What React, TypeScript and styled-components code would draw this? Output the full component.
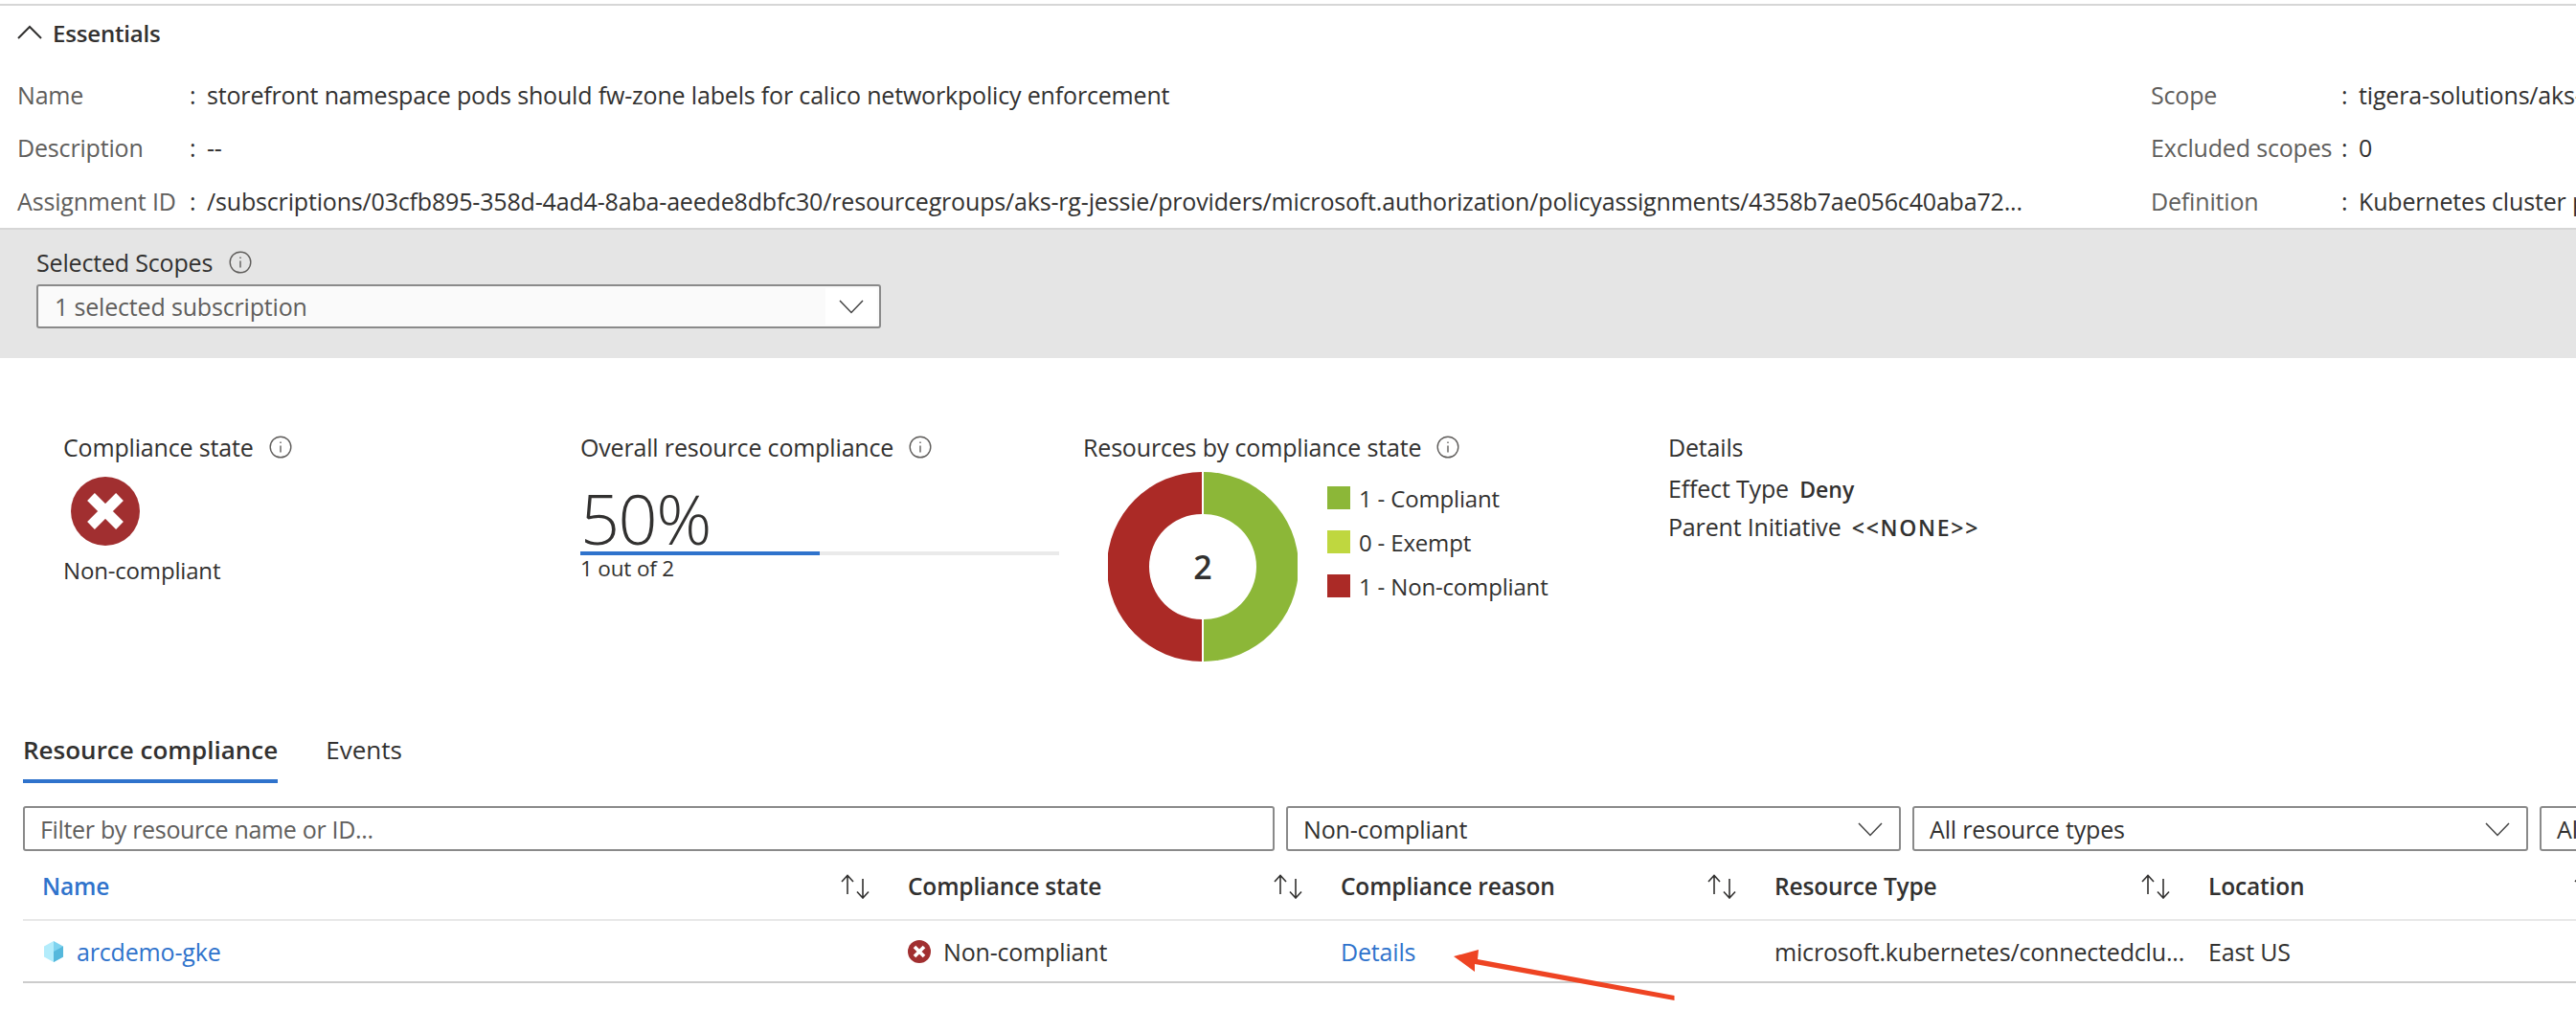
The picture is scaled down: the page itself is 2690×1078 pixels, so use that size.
import * as React from 'react';
import styled, { createGlobalStyle } from 'styled-components';

const GlobalStyle = createGlobalStyle`
  html, body {
    margin: 0;
    padding: 0;
    background: #ffffff;
    overflow: hidden;
  }
  * {
    box-sizing: border-box;
  }
`;

const TEXT = '#323130';
const MUTED = '#605e5c';
const LINK = '#2f73cc';
const RED = '#a12f30';

interface IInfoRow {
  label: string;
  value: string;
}

const leftRows: IInfoRow[] = [
  { label: 'Name', value: 'storefront namespace pods should fw-zone labels for calico networkpolicy enforcement' },
  { label: 'Description', value: '--' },
  {
    label: 'Assignment ID',
    value:
      '/subscriptions/03cfb895-358d-4ad4-8aba-aeede8dbfc30/resourcegroups/aks-rg-jessie/providers/microsoft.authorization/policyassignments/4358b7ae056c40aba72...',
  },
];

const rightRows: IInfoRow[] = [
  { label: 'Scope', value: 'tigera-solutions/aks-rg-jessie' },
  { label: 'Excluded scopes', value: '0' },
  { label: 'Definition', value: 'Kubernetes cluster pods should use labels' },
];

const legend = [
  { color: '#8cb738', label: '1 - Compliant' },
  { color: '#bfd73f', label: '0 - Exempt' },
  { color: '#ab2a26', label: '1 - Non-compliant' },
];

const Chevron = ({ up }: { up?: boolean }) => (
  <svg width="26" height="16" viewBox="0 0 26 16" fill="none" stroke={up ? '#323130' : '#444444'} strokeWidth={up ? 2 : 1.5}>
    <path d={up ? 'M1 14 L13 2 L25 14' : 'M1 2 L13 14.5 L25 2'} />
  </svg>
);

const InfoIcon = () => (
  <svg width="24" height="24" viewBox="0 0 24 24" fill="none" stroke="#605e5c" strokeWidth="1.4">
    <circle cx="12" cy="12" r="10.8" />
    <path d="M12 10.5 V17.5" />
    <path d="M12 6.5 V8" />
  </svg>
);

const SortIcon = () => (
  <svg width="34" height="26" viewBox="0 0 34 26" fill="none" stroke="#323130" strokeWidth="1.6">
    <path d="M9 1.5 V21 M3 8 L9 1.5 L15 8" />
    <path d="M25 5 V25 M19 18.5 L25 25 L31 18.5" />
  </svg>
);

const ErrorIcon = ({ size }: { size: number }) => (
  <svg width={size} height={size} viewBox="0 0 72 72">
    <circle cx="36" cy="36" r="36" fill={RED} />
    <path d="M21 21 L51 51 M51 21 L21 51" stroke="#ffffff" strokeWidth="11" />
  </svg>
);

const CubeIcon = () => (
  <svg width="22" height="24" viewBox="0 0 22 24">
    <path d="M11 1 L21 6.5 V17.5 L11 23 Z" fill="#7fd3ef" />
    <path d="M11 1 L1 6.5 V17.5 L11 23 Z" fill="#b3ecfb" />
    <path d="M11 12 L21 6.5 V17.5 L11 23 Z" fill="#55b8dc" />
  </svg>
);

const Donut = () => (
  <svg width="198" height="198" viewBox="0 0 198 198">
    <path d="M100 0 A99 99 0 0 1 100 198 V154 A55 55 0 0 0 100 44 Z" fill="#8cb738" />
    <path d="M98 0 A99 99 0 0 0 98 198 V154 A55 55 0 0 1 98 44 Z" fill="#ab2a26" />
  </svg>
);

const RedArrow = () => (
  <svg width="240" height="60" viewBox="0 0 240 60">
    <path d="M2 9 L28 2 L27 12 L232.5 50 L232.5 55 L24 17 L24 25 Z" fill="#ee4423" />
  </svg>
);

export default function App(): JSX.Element {
  return (
    <Page>
      <GlobalStyle />
      <Essentials>
        <EssentialsHeader>
          <Chevron up />
          <EssentialsTitle>Essentials</EssentialsTitle>
        </EssentialsHeader>
        <InfoColumns>
          <InfoColumn $width={2228}>
            {leftRows.map((row) => (
              <InfoLine key={row.label}>
                <InfoLabel $width={180}>{row.label}</InfoLabel>
                <InfoColon>:</InfoColon>
                <InfoValue>{row.value}</InfoValue>
              </InfoLine>
            ))}
          </InfoColumn>
          <InfoColumn $width={444}>
            {rightRows.map((row) => (
              <InfoLine key={row.label}>
                <InfoLabel $width={199}>{row.label}</InfoLabel>
                <InfoColon>:</InfoColon>
                <InfoValue>{row.value}</InfoValue>
              </InfoLine>
            ))}
          </InfoColumn>
        </InfoColumns>
      </Essentials>

      <ScopePanel>
        <ScopeLabel>
          Selected Scopes
          <InfoIcon />
        </ScopeLabel>
        <ScopeSelect>
          <span>1 selected subscription</span>
          <ScopeChevron>
            <Chevron />
          </ScopeChevron>
        </ScopeSelect>
      </ScopePanel>

      <Metrics>
        <MetricColumn $width={540}>
          <MetricTitle>
            Compliance state
            <InfoIcon />
          </MetricTitle>
          <StateIcon>
            <ErrorIcon size={72} />
          </StateIcon>
          <StateText>Non-compliant</StateText>
        </MetricColumn>
        <MetricColumn $width={525}>
          <MetricTitle>
            Overall resource compliance
            <InfoIcon />
          </MetricTitle>
          <Percent>50%</Percent>
          <Bar>
            <BarFill style={{ width: '50%' }} />
          </Bar>
          <BarCaption>1 out of 2</BarCaption>
        </MetricColumn>
        <MetricColumn $width={611}>
          <MetricTitle>
            Resources by compliance state
            <InfoIcon />
          </MetricTitle>
          <ChartRow>
            <DonutWrap>
              <Donut />
              <DonutCount>2</DonutCount>
            </DonutWrap>
            <Legend>
              {legend.map((item) => (
                <LegendItem key={item.label}>
                  <Swatch $color={item.color} />
                  {item.label}
                </LegendItem>
              ))}
            </Legend>
          </ChartRow>
        </MetricColumn>
        <MetricColumn $width={500}>
          <MetricTitle>Details</MetricTitle>
          <DetailLine $top={13}>
            Effect Type <DetailValue>Deny</DetailValue>
          </DetailLine>
          <DetailLine $top={10}>
            Parent Initiative <DetailValue $spacing={1.7}>&lt;&lt;NONE&gt;&gt;</DetailValue>
          </DetailLine>
        </MetricColumn>
      </Metrics>

      <Tabs>
        <Tab $active>Resource compliance</Tab>
        <Tab>Events</Tab>
      </Tabs>

      <Filters>
        <FilterBox $width={1307}>
          <Placeholder>Filter by resource name or ID...</Placeholder>
        </FilterBox>
        <FilterBox $width={642}>
          <span>Non-compliant</span>
          <Chevron />
        </FilterBox>
        <FilterBox $width={643}>
          <span>All resource types</span>
          <Chevron />
        </FilterBox>
        <FilterBox $width={643}>
          <span>All locations</span>
          <Chevron />
        </FilterBox>
      </Filters>

      <Table>
        <HeadRow>
          <HeadCell $first $link>
            Name
            <SortIcon />
          </HeadCell>
          <HeadCell>
            Compliance state
            <SortIcon />
          </HeadCell>
          <HeadCell>
            Compliance reason
            <SortIcon />
          </HeadCell>
          <HeadCell>
            Resource Type
            <SortIcon />
          </HeadCell>
          <HeadCell>
            Location
            <SortIcon />
          </HeadCell>
        </HeadRow>
        <BodyRow>
          <BodyCell $first>
            <CubeIcon />
            <LinkText>arcdemo-gke</LinkText>
          </BodyCell>
          <BodyCell>
            <ErrorIcon size={24} />
            Non-compliant
          </BodyCell>
          <BodyCell>
            <LinkText>Details</LinkText>
          </BodyCell>
          <BodyCell>microsoft.kubernetes/connectedclu...</BodyCell>
          <BodyCell>East US</BodyCell>
        </BodyRow>
      </Table>

      <Annotation>
        <RedArrow />
      </Annotation>
    </Page>
  );
}

const Page = styled.div`
  position: relative;
  width: 2690px;
  height: 1078px;
  overflow: hidden;
  padding-top: 4px;
  background: #ffffff;
  color: ${TEXT};
  font-family: 'Open Sans', 'Noto Sans', sans-serif;
  font-size: 25px;
  letter-spacing: -0.17px;
  white-space: nowrap;
`;

const Essentials = styled.section`
  border-top: 2px solid #d6d6d6;
  border-bottom: 2px solid #d6d6d6;
  height: 236px;
`;

const EssentialsHeader = styled.div`
  display: flex;
  align-items: center;
  gap: 11px;
  height: 56px;
  padding-left: 18px;
`;

const EssentialsTitle = styled.span`
  font-size: 24px;
  font-weight: 600;
`;

const InfoColumns = styled.div`
  display: flex;
  padding: 9px 0 0 18px;
`;

const InfoColumn = styled.div<{ $width: number }>`
  display: grid;
  grid-auto-rows: 55.5px;
  flex: none;
  width: ${(p) => p.$width}px;
`;

const InfoLine = styled.div`
  display: flex;
  align-items: center;
`;

const InfoLabel = styled.span<{ $width: number }>`
  flex: none;
  width: ${(p) => p.$width}px;
  color: ${MUTED};
`;

const InfoColon = styled.span`
  flex: none;
  width: 18px;
`;

const InfoValue = styled.span`
  flex: none;
`;

const ScopePanel = styled.section`
  height: 134px;
  padding: 19px 0 0 38px;
  background: #e5e5e5;
`;

const ScopeLabel = styled.div`
  display: flex;
  align-items: center;
  gap: 17px;
  height: 30px;
  margin-bottom: 8px;
`;

const ScopeSelect = styled.div`
  display: flex;
  align-items: center;
  justify-content: space-between;
  width: 882px;
  height: 46px;
  padding-left: 17px;
  background: #fafafa;
  border: 2px solid #8a8a8a;
  border-radius: 3px;
  color: ${MUTED};
`;

const ScopeChevron = styled.span`
  display: flex;
  align-items: center;
  justify-content: center;
  width: 54px;
  height: 38px;
  margin-right: 2px;
  background: #ffffff;
`;

const Metrics = styled.section`
  display: flex;
  height: 386px;
  padding: 78px 0 0 66px;
`;

const MetricColumn = styled.div<{ $width: number }>`
  flex: none;
  width: ${(p) => p.$width}px;
`;

const MetricTitle = styled.div`
  display: flex;
  align-items: center;
  gap: 16px;
  height: 30px;
`;

const StateIcon = styled.div`
  display: flex;
  margin: 16px 0 0 8px;
`;

const StateText = styled.div`
  margin-top: 10px;
  font-size: 24px;
  line-height: 32px;
`;

const Percent = styled.div`
  height: 64px;
  margin-top: 30px;
  font-size: 72px;
  font-weight: 300;
  line-height: 58px;
  letter-spacing: -1.5px;
`;

const Bar = styled.div`
  width: 500px;
  height: 4px;
  background: #eaeaea;
`;

const BarFill = styled.div`
  height: 100%;
  background: ${LINK};
`;

const BarCaption = styled.div`
  line-height: 28px;
  font-size: 22.5px;
`;

const ChartRow = styled.div`
  display: flex;
  margin-top: 11px;
  padding-left: 26px;
`;

const DonutWrap = styled.div`
  position: relative;
  flex: none;
  width: 198px;
  height: 198px;
`;

const DonutCount = styled.span`
  position: absolute;
  inset: 0;
  display: flex;
  align-items: center;
  justify-content: center;
  font-size: 34px;
  font-weight: 600;
`;

const Legend = styled.div`
  display: flex;
  flex-direction: column;
  gap: 22px;
  padding: 15px 0 0 31px;
  font-size: 24px;
`;

const LegendItem = styled.div`
  display: flex;
  align-items: center;
  gap: 9px;
  height: 24px;
`;

const Swatch = styled.span<{ $color: string }>`
  flex: none;
  width: 24px;
  height: 24px;
  background: ${(p) => p.$color};
`;

const DetailLine = styled.div<{ $top: number }>`
  height: 30px;
  margin-top: ${(p) => p.$top}px;
  line-height: 30px;
`;

const DetailValue = styled.strong<{ $spacing?: number }>`
  margin-left: 5px;
  font-size: 23px;
  font-weight: 600;
  letter-spacing: ${(p) => p.$spacing ?? 0}px;
`;

const Tabs = styled.nav`
  display: flex;
  gap: 50px;
  height: 58px;
  padding-left: 24px;
`;

const Tab = styled.div<{ $active?: boolean }>`
  padding-top: 5px;
  font-size: 26px;
  letter-spacing: 0;
  font-weight: ${(p) => (p.$active ? 600 : 400)};
  border-bottom: 4px solid ${(p) => (p.$active ? LINK : 'transparent')};
`;

const Filters = styled.div`
  display: flex;
  gap: 12px;
  margin-top: 24px;
  padding-left: 24px;
`;

const FilterBox = styled.div<{ $width: number }>`
  display: flex;
  flex: none;
  align-items: center;
  justify-content: space-between;
  width: ${(p) => p.$width}px;
  height: 47px;
  padding: 0 17px 0 16px;
  border: 2px solid #8a8a8a;
  border-radius: 3px;
`;

const Placeholder = styled.span`
  color: ${MUTED};
  letter-spacing: -0.33px;
`;

const Table = styled.div`
  width: 2782px;
  margin-left: 24px;
`;

const HeadRow = styled.div`
  display: grid;
  grid-template-columns: 924px 452px 453px 453px 452px;
  height: 73px;
  border-bottom: 2px solid #e8e8e8;
`;

const HeadCell = styled.div<{ $first?: boolean; $link?: boolean }>`
  display: flex;
  align-items: center;
  justify-content: space-between;
  padding: 2px 38px 0 ${(p) => (p.$first ? 20 : 0)}px;
  font-size: 24.5px;
  font-weight: 600;
  color: ${(p) => (p.$link ? LINK : TEXT)};
`;

const BodyRow = styled.div`
  display: grid;
  grid-template-columns: 924px 452px 453px 453px 452px;
  height: 65px;
  border-bottom: 2px solid #cccccc;
`;

const BodyCell = styled.div<{ $first?: boolean }>`
  display: flex;
  align-items: center;
  gap: 13px;
  padding-left: ${(p) => (p.$first ? 21 : 0)}px;
`;

const LinkText = styled.span`
  color: ${LINK};
`;

const Annotation = styled.div`
  position: absolute;
  left: 1516px;
  top: 990px;
  display: flex;
`;
